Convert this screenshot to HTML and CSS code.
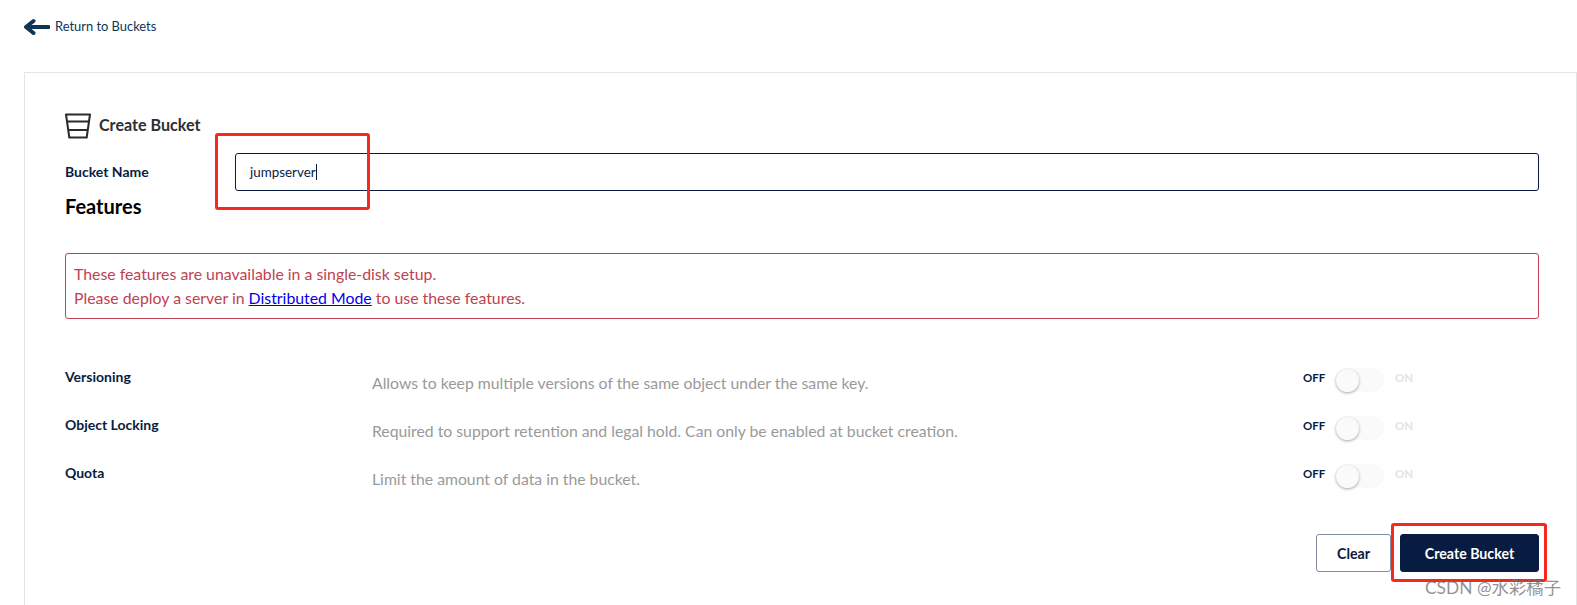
FILE: index.html
```html
<!DOCTYPE html>
<html lang="en">
<head>
<meta charset="utf-8">
<title>Create Bucket</title>
<link rel="stylesheet" href="styles.css">
</head>
<body>
<div class="page">
  <a class="back">
    <svg class="back-icon" viewBox="0 0 26 18" width="26" height="18"><path d="M24.500 9H3M9.500 3 2 9l7.500 6" fill="none" stroke="#0c3558" stroke-width="4" stroke-linecap="round" stroke-linejoin="round"/></svg>
    <span class="back-text">Return to Buckets</span>
  </a>
  <section class="card">
    <div class="title-row">
      <svg class="bucket-icon" viewBox="0 0 26 26" width="26" height="26"><path d="M1 1.500h24l-3.300 23H4.300zM2 8.500h22M3.200 17h19.600" fill="none" stroke="#2a2a2a" stroke-width="2" stroke-linejoin="round"/></svg>
      <h1 class="title">Create Bucket</h1>
    </div>
    <div class="name-row">
      <label class="field-label">Bucket Name</label>
      <div class="input"><span>jumpserver</span><i class="caret"></i></div>
    </div>
    <h2 class="features">Features</h2>
    <div class="alert">
      <div>These features are unavailable in a single-disk setup.</div>
      <div>Please deploy a server in <a class="link">Distributed Mode</a> to use these features.</div>
    </div>
    <div class="rows">
      <div class="row">
        <div class="row-label">Versioning</div>
        <div class="row-desc">Allows to keep multiple versions of the same object under the same key.</div>
        <div class="switch"><span class="off">OFF</span><span class="track"><i class="knob"></i></span><span class="on">ON</span></div>
      </div>
      <div class="row">
        <div class="row-label">Object Locking</div>
        <div class="row-desc">Required to support retention and legal hold. Can only be enabled at bucket creation.</div>
        <div class="switch"><span class="off">OFF</span><span class="track"><i class="knob"></i></span><span class="on">ON</span></div>
      </div>
      <div class="row">
        <div class="row-label">Quota</div>
        <div class="row-desc">Limit the amount of data in the bucket.</div>
        <div class="switch"><span class="off">OFF</span><span class="track"><i class="knob"></i></span><span class="on">ON</span></div>
      </div>
    </div>
    <div class="actions">
      <button class="btn btn-clear">Clear</button>
      <button class="btn btn-primary">Create Bucket</button>
    </div>
  </section>
  <div class="mark mark-input"></div>
  <div class="mark mark-button"></div>
  <div class="watermark">CSDN @水彩橘子</div>
</div>
</body>
</html>
```
FILE: styles.css
```css
* { box-sizing: border-box; }
html, body { margin: 0; height: 100%; background: #fff; overflow: hidden; }
.page { position: relative; width: 1577px; height: 605px; overflow: hidden; font-family: Lato, "Noto Sans CJK SC", sans-serif; color: #081c42; }
.back { display: flex; align-items: center; gap: 5px; height: 72px; padding: 0 0 18px 24px; font-size: 12.900px; color: #0c3558; }
.back-text { padding-bottom: 2px; }
.back-icon { display: block; }
.card { margin-left: 24px; height: 600px; border: 1px solid #e5e5e5; padding: 40px 37px 0 40px; }
.title-row { display: flex; align-items: center; gap: 8px; height: 26px; }
.bucket-icon { display: block; }
.title { margin: 0; padding-bottom: 3px; font-size: 16.100px; font-weight: 700; color: #2e2e2e; }
.name-row { display: flex; align-items: center; margin-top: 14px; }
.field-label { width: 170px; padding-bottom: 2px; font-size: 14px; font-weight: 700; }
.input { flex: 1; display: flex; align-items: center; height: 38px; padding-left: 14px; border: 1px solid #081c42; border-radius: 3px; font-size: 13.400px; }
.caret { display: block; width: 1px; height: 16px; background: #081c42; }
.features { margin: 0; font-size: 20px; line-height: 30px; font-weight: 700; color: #000; }
.alert { margin-top: 32px; height: 66px; padding: 8px 8px; border: 1px solid #c0414f; border-radius: 3px; font-size: 15.850px; line-height: 24px; color: #c0414f; }
.link { color: #0000ee; text-decoration: underline; }
.rows { margin-top: 42px; }
.row { display: grid; grid-template-columns: 307px 1fr auto; height: 48px; align-items: start; }
.row-label { font-size: 14px; font-weight: 700; line-height: 20px; margin-top: 6px; }
.row-desc { font-size: 15.770px; line-height: 22px; margin-top: 11px; color: #9a9a9a; }
.switch { display: flex; align-items: center; width: 236px; height: 24px; margin-top: 7px; font-size: 11.500px; font-weight: 700; }
.off { width: 33px; padding-bottom: 6px; }
.track { position: relative; display: block; width: 48px; height: 24px; border-radius: 12px; background: #fafafa; }
.knob { position: absolute; left: 0; top: 1px; width: 23px; height: 23px; border-radius: 50%; background: #fafafa; box-shadow: 0 1px 3px rgba(0, 0, 0, .35); }
.on { margin-left: 11px; padding-bottom: 6px; color: #e0e6e0; }
.actions { display: flex; justify-content: flex-end; gap: 9px; margin-top: 29px; }
.btn { height: 38px; border-radius: 3px; font-family: inherit; font-size: 14.200px; font-weight: 700; padding: 0; }
.btn-clear { width: 75px; background: #fff; color: #081c42; border: 1px solid #7f8ba3; }
.btn-primary { width: 139px; background: #081c42; color: #fff; border: 1px solid #081c42; }
.mark { position: absolute; border: 3px solid #f5291c; border-radius: 3px; }
.mark-input { left: 215px; top: 133px; width: 155px; height: 77px; }
.mark-button { left: 1391px; top: 523px; width: 156px; height: 59px; }
.watermark { position: absolute; left: 1425px; top: 578px; font-size: 17.400px; line-height: 20px; color: rgba(110, 110, 110, .75); white-space: nowrap; }
```
